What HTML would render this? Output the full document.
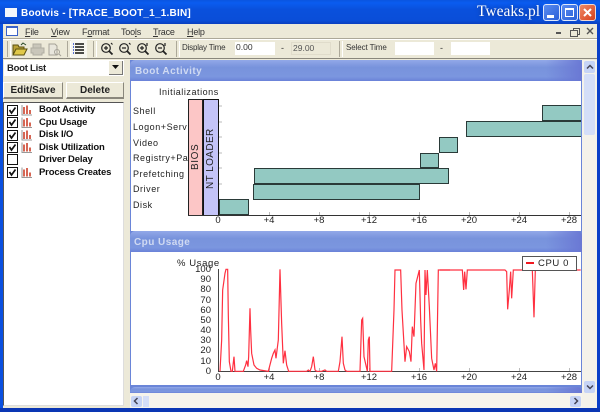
<!DOCTYPE html>
<html>
<head>
<meta charset="utf-8">
<style>
html,body{margin:0;padding:0;background:#0a3fc8;}
#w{position:relative;width:600px;height:412px;overflow:hidden;background:#ece9d8;font-family:"Liberation Sans",sans-serif;color:#000;filter:blur(.3px);}
#w div,#w span.a{position:absolute;}
.t{white-space:nowrap;line-height:12px;}
u{text-decoration:underline;}
.btn{background:#ece9d8;border-top:1px solid #fff;border-left:1px solid #fff;border-right:1px solid #8a877c;border-bottom:2px solid #8a877c;font-weight:bold;font-size:10px;text-align:center;line-height:15px;box-sizing:border-box;color:#222;}
.inp{background:#fff;box-sizing:border-box;font-size:8px;line-height:14px;padding-left:1px;}
.hd{background:linear-gradient(90deg,transparent 92%,#6a78d4 100%),linear-gradient(#92a8e8,#7893dc 35%,#7b96df 80%,#6a82d8);border-radius:5px 5px 0 0;}
.ht{color:#d0daf2;font-size:10px;font-weight:bold;letter-spacing:.45px;white-space:nowrap;line-height:12px;}
.cb{width:11px;height:11px;border:1px solid #111;background:#fff;box-sizing:border-box;}
.li{font-size:9.5px;font-weight:bold;white-space:nowrap;line-height:12px;letter-spacing:-.15px;color:#111;}
.m{font-size:9px;letter-spacing:-.2px;color:#333;top:26px;}
.lb{font-size:9px;letter-spacing:.55px;white-space:nowrap;line-height:11px;color:#222;}
.ax{font-size:9.5px;white-space:nowrap;line-height:11px;color:#222;text-align:center;width:30px;}
.yl{font-size:9.5px;white-space:nowrap;line-height:11px;color:#222;text-align:right;width:24px;left:187px;}
.bar{background:#93c9c2;border:1px solid #2a3a38;box-sizing:border-box;}
.sep{width:2px;border-left:1px solid #aca899;border-right:1px solid #fff;top:41px;height:16px;}
</style>
</head>
<body>
<div id="w">
<!-- frame -->
<div style="left:0;top:0;width:600px;height:24px;background:linear-gradient(#0a55e0,#0a5cf0 12%,#0a50dc 40%,#0a4ed8 85%,#0a3fc0);"></div>
<div style="left:0;top:24px;width:3px;height:388px;background:#0a50e0;"></div>
<div style="left:597px;top:24px;width:3px;height:388px;background:#0a3fc8;"></div>
<div style="left:0;top:408px;width:600px;height:4px;background:#0a36b4;"></div>

<!-- title -->
<div style="left:5px;top:8px;width:12px;height:9px;background:#f4f6fb;"></div>
<div class="t" style="left:21px;top:8px;color:#fff;font-size:10px;font-weight:bold;letter-spacing:.22px;">Bootvis - [TRACE_BOOT_1_1.BIN]</div>
<div class="t" style="left:477px;top:2px;color:#fff;font-family:'Liberation Serif',serif;font-size:15.5px;line-height:20px;text-shadow:0 0 4px #123a90;">Tweaks.pl</div>
<div style="left:543px;top:4px;width:17px;height:17px;border:1px solid #dfe8fb;border-radius:3px;background:linear-gradient(135deg,#5a8cf0,#2a5fd8);box-sizing:border-box;"><div style="left:3px;top:10px;width:7px;height:3px;background:#fff;"></div></div>
<div style="left:561px;top:4px;width:17px;height:17px;border:1px solid #dfe8fb;border-radius:3px;background:linear-gradient(135deg,#5a8cf0,#2a5fd8);box-sizing:border-box;"><div style="left:3px;top:3px;width:9px;height:9px;border:1px solid #fff;border-top-width:2px;box-sizing:border-box;"></div></div>
<div style="left:579px;top:4px;width:17px;height:17px;border:1px solid #f2d8d0;border-radius:3px;background:linear-gradient(135deg,#ee8a66,#d8401c);box-sizing:border-box;">
<svg style="position:absolute;left:2px;top:2px" width="11" height="11"><path d="M2 2L9 9M9 2L2 9" stroke="#fff" stroke-width="2"/></svg></div>

<!-- menu -->
<div style="left:6px;top:26px;width:12px;height:10px;background:#fff;border:1px solid #3a62c8;border-top-width:2px;box-sizing:border-box;"></div>
<div class="t m" style="left:25px;"><u>F</u>ile</div>
<div class="t m" style="left:51px;"><u>V</u>iew</div>
<div class="t m" style="left:82px;">F<u>o</u>rmat</div>
<div class="t m" style="left:121px;">Too<u>l</u>s</div>
<div class="t m" style="left:153px;"><u>T</u>race</div>
<div class="t m" style="left:187px;"><u>H</u>elp</div>
<div style="left:556px;top:32px;width:5px;height:2px;background:#555;"></div>
<div style="left:573px;top:28px;width:5px;height:5px;border:1px solid #555;"></div>
<div style="left:570px;top:30px;width:6px;height:5px;border:1px solid #555;background:#ece9d8;"></div>
<svg style="position:absolute;left:586px;top:27px" width="9" height="9"><path d="M1 1L7 7M7 1L1 7" stroke="#555" stroke-width="1.4"/></svg>
<div style="left:3px;top:38px;width:594px;height:1px;background:#aca899;"></div>
<div style="left:3px;top:39px;width:594px;height:1px;background:#fff;"></div>

<!-- toolbar -->
<div class="sep" style="left:7px;"></div>
<svg style="position:absolute;left:12px;top:42px" width="16" height="14"><path d="M1 3h5l1 2h5v2H5L1 12z" fill="#b8a038" stroke="#5a5010"/><path d="M4 7h11l-3 6H1z" fill="#e0c848" stroke="#5a5010"/><path d="M9 3l2-2 3 2" fill="none" stroke="#2a4a2a"/></svg>
<svg style="position:absolute;left:30px;top:42px" width="15" height="14"><path d="M3 6V2h8v4M1 6h13v5h-2v2H3v-2H1z" fill="#c9c6ba" stroke="#b0ada2"/></svg>
<svg style="position:absolute;left:48px;top:43px" width="14" height="14"><path d="M1 1h6l2 2v9H1z" fill="#e8e6dc" stroke="#a6a398"/><circle cx="9" cy="9" r="2.5" fill="none" stroke="#a6a398"/><path d="M11 11l2 2" stroke="#a6a398"/></svg>
<div class="sep" style="left:67px;"></div>
<div style="left:71px;top:40px;width:16px;height:18px;background:#f7f6f0;"></div>
<svg style="position:absolute;left:72px;top:42px" width="14" height="14"><path d="M3 2h9M3 5h9M3 8h9M3 11h9" stroke="#111" stroke-width="1.6"/><path d="M1 2h1M1 5h1M1 8h1M1 11h1" stroke="#2244cc" stroke-width="1.6"/></svg>
<div class="sep" style="left:93px;"></div>
<svg style="position:absolute;left:100px;top:41px" width="70" height="16" fill="none" stroke="#222" stroke-width="1.2">
<g><circle cx="6" cy="7" r="4.300"/><path d="M9 10l3.500 3.500" stroke-width="1.8"/><path d="M4 7h4M6 5v4M11 2l1.500 1.500"/></g>
<g transform="translate(18 0)"><circle cx="6" cy="7" r="4.300"/><path d="M9 10l3.500 3.500" stroke-width="1.8"/><path d="M4 7h4M11 2l1.500 1.500"/></g>
<g transform="translate(36 0)"><circle cx="6" cy="7" r="4.300"/><path d="M9 10l3.500 3.500" stroke-width="1.8"/><path d="M4 7h4M6 5v4M11 2v3"/></g>
<g transform="translate(54 0)"><circle cx="6" cy="7" r="4.300"/><path d="M9 10l3.500 3.500" stroke-width="1.8"/><path d="M4 7h4M11 2v3"/></g>
</svg>
<div class="sep" style="left:176px;"></div>
<div class="t" style="left:182px;top:42px;font-size:8px;letter-spacing:-.2px;color:#333;">Display Time</div>
<div class="inp" style="left:235px;top:42px;width:40px;height:13px;line-height:10px;font-size:8.5px;color:#333;">0.00</div>
<div class="t" style="left:281px;top:42px;font-size:9px;color:#333;">-</div>
<div class="inp" style="left:291px;top:42px;width:40px;height:13px;line-height:10px;font-size:8.5px;color:#555;background:#ece9d8;border:1px solid #e0dccb;">29.00</div>
<div class="sep" style="left:339px;"></div>
<div class="t" style="left:346px;top:42px;font-size:8px;letter-spacing:-.1px;color:#333;">Select Time</div>
<div class="inp" style="left:395px;top:42px;width:39px;height:13px;"></div>
<div class="t" style="left:440px;top:42px;font-size:9px;color:#333;">-</div>
<div class="inp" style="left:451px;top:42px;width:39px;height:13px;"></div>
<div style="left:3px;top:58px;width:594px;height:1px;background:#8a877c;"></div>

<!-- left pane -->
<div style="left:4px;top:60px;width:120px;height:16px;background:#fff;"></div>
<div class="t" style="left:7px;top:63px;font-size:9.5px;letter-spacing:-.25px;font-weight:bold;color:#222;">Boot List</div>
<div style="left:109px;top:61px;width:14px;height:14px;background:#ece9d8;border-right:1px solid #777;border-bottom:1px solid #777;box-sizing:border-box;"></div>
<svg style="position:absolute;left:112px;top:65px" width="8" height="5"><path d="M0 0h7L3.500 4z" fill="#111"/></svg>
<div class="btn" style="left:3px;top:82px;width:60px;height:17px;">Edit/Save</div>
<div class="btn" style="left:66px;top:82px;width:58px;height:17px;">Delete</div>
<div style="left:3px;top:102px;width:121px;height:304px;background:#fff;border:1px solid #555;border-right-color:#ddd;border-bottom-color:#ddd;box-sizing:border-box;"></div>

<div class="cb" style="left:7px;top:105px;"></div><svg style="position:absolute;left:8px;top:106px" width="9" height="9"><path d="M1.500 4L3.500 7L7.500 1.500" fill="none" stroke="#111" stroke-width="1.700"/></svg>
<div class="cb" style="left:7px;top:117px;"></div><svg style="position:absolute;left:8px;top:118px" width="9" height="9"><path d="M1.500 4L3.500 7L7.500 1.500" fill="none" stroke="#111" stroke-width="1.700"/></svg>
<div class="cb" style="left:7px;top:130px;"></div><svg style="position:absolute;left:8px;top:131px" width="9" height="9"><path d="M1.500 4L3.500 7L7.500 1.500" fill="none" stroke="#111" stroke-width="1.700"/></svg>
<div class="cb" style="left:7px;top:142px;"></div><svg style="position:absolute;left:8px;top:143px" width="9" height="9"><path d="M1.500 4L3.500 7L7.500 1.500" fill="none" stroke="#111" stroke-width="1.700"/></svg>
<div class="cb" style="left:7px;top:154px;"></div>
<div class="cb" style="left:7px;top:167px;"></div><svg style="position:absolute;left:8px;top:168px" width="9" height="9"><path d="M1.500 4L3.500 7L7.500 1.500" fill="none" stroke="#111" stroke-width="1.700"/></svg>

<svg style="position:absolute;left:21px;top:104px" width="12" height="75">
<g><path d="M1 1v10h10" fill="none" stroke="#999"/><path d="M3 3v7M6 1.500v8.500M9 6v4" stroke="#c8341c" stroke-width="1.500"/></g>
<g transform="translate(0 12.500)"><path d="M1 1v10h10" fill="none" stroke="#999"/><path d="M3 3v7M6 1.500v8.500M9 6v4" stroke="#c8341c" stroke-width="1.500"/></g>
<g transform="translate(0 25)"><path d="M1 1v10h10" fill="none" stroke="#999"/><path d="M3 3v7M6 1.500v8.500M9 6v4" stroke="#c8341c" stroke-width="1.500"/></g>
<g transform="translate(0 37.500)"><path d="M1 1v10h10" fill="none" stroke="#999"/><path d="M3 3v7M6 1.500v8.500M9 6v4" stroke="#c8341c" stroke-width="1.500"/></g>
<g transform="translate(0 62.500)"><path d="M1 1v10h10" fill="none" stroke="#999"/><path d="M3 3v7M6 1.500v8.500M9 6v4" stroke="#c8341c" stroke-width="1.500"/></g>
</svg>
<div class="li" style="left:39px;top:104px;">Boot Activity</div>
<div class="li" style="left:39px;top:117px;">Cpu Usage</div>
<div class="li" style="left:39px;top:129px;">Disk I/O</div>
<div class="li" style="left:39px;top:142px;">Disk Utilization</div>
<div class="li" style="left:39px;top:154px;">Driver Delay</div>
<div class="li" style="left:39px;top:167px;">Process Creates</div>

<!-- right pane -->
<div style="left:130px;top:60px;width:452px;height:333px;background:#6a85d8;"></div>
<div class="hd" style="left:130px;top:60px;width:452px;height:21px;"></div>
<div class="ht" style="left:135px;top:66px;">Boot Activity</div>
<div style="left:131px;top:81px;width:450px;height:150px;background:#fff;"></div>
<div class="hd" style="left:130px;top:231px;width:452px;height:21px;"></div>
<div class="ht" style="left:134px;top:237px;">Cpu Usage</div>
<div style="left:131px;top:252px;width:450px;height:133px;background:#fff;"></div>
<div class="hd" style="left:130px;top:387px;width:452px;height:6px;"></div>

<!-- boot activity chart -->
<div class="lb" style="left:159px;top:87px;color:#222;">Initializations</div>
<div class="lb" style="left:133px;top:106px;">Shell</div>
<div class="lb" style="left:133px;top:122px;width:54px;overflow:hidden;">Logon+Services</div>
<div class="lb" style="left:133px;top:138px;">Video</div>
<div class="lb" style="left:133px;top:153px;width:55px;overflow:hidden;">Registry+Pagefile</div>
<div class="lb" style="left:133px;top:169px;">Prefetching</div>
<div class="lb" style="left:133px;top:184px;">Driver</div>
<div class="lb" style="left:133px;top:200px;">Disk</div>
<div style="left:188px;top:99px;width:15px;height:117px;background:#fcc6c6;border:1px solid #222;border-bottom:0;box-sizing:border-box;"></div>
<div style="left:203px;top:99px;width:16px;height:117px;background:#c4c4f8;border:1px solid #111;border-bottom:0;box-sizing:border-box;"></div>
<div class="t" style="left:195px;top:170px;width:0;height:0;"><span class="a" style="transform:rotate(-90deg);transform-origin:0 0;left:-5px;top:0;font-size:10px;letter-spacing:.6px;white-space:nowrap;color:#222;">BIOS</span></div>
<div class="t" style="left:211px;top:189px;width:0;height:0;"><span class="a" style="transform:rotate(-90deg);transform-origin:0 0;left:-6px;top:0;font-size:10px;letter-spacing:.4px;white-space:nowrap;color:#222;">NT LOADER</span></div>
<div style="left:188px;top:215px;width:393px;height:1px;background:#333;"></div>
<div class="bar" style="left:219px;top:199px;width:30px;height:16px;"></div>
<div class="bar" style="left:253px;top:184px;width:167px;height:16px;"></div>
<div class="bar" style="left:254px;top:168px;width:195px;height:16px;"></div>
<div class="bar" style="left:420px;top:153px;width:19px;height:15px;"></div>
<div class="bar" style="left:439px;top:137px;width:19px;height:16px;"></div>
<div class="bar" style="left:466px;top:121px;width:115px;height:16px;border-right:0;"></div>
<div class="bar" style="left:542px;top:105px;width:39px;height:16px;border-right:0;"></div>
<svg style="position:absolute;left:219px;top:100px" width="4" height="115"><path d="M0 6h3M0 22h3M0 37h3M0 53h3M0 68h3M0 84h3" stroke="#bbb"/></svg>
<svg style="position:absolute;left:0;top:0" width="600" height="412"><path d="M269.500 212v3M319.500 212v3M369.500 212v3M419.500 212v3M469.500 212v3M519.500 212v3M569.500 212v3M269.500 368v3M319.500 368v3M369.500 368v3M419.500 368v3M469.500 368v3M519.500 368v3M569.500 368v3" stroke="#bbb"/></svg>
<div class="ax" style="left:203px;top:215px;">0</div>
<div class="ax" style="left:254px;top:215px;">+4</div>
<div class="ax" style="left:304px;top:215px;">+8</div>
<div class="ax" style="left:354px;top:215px;">+12</div>
<div class="ax" style="left:404px;top:215px;">+16</div>
<div class="ax" style="left:454px;top:215px;">+20</div>
<div class="ax" style="left:504px;top:215px;">+24</div>
<div class="ax" style="left:554px;top:215px;">+28</div>

<!-- cpu chart -->
<div class="t" style="left:177px;top:258px;font-size:9.5px;letter-spacing:.6px;color:#222;line-height:11px;">% Usage</div>
<div class="yl t" style="top:264px;">100</div>
<div class="yl t" style="top:274px;">90</div>
<div class="yl t" style="top:284px;">80</div>
<div class="yl t" style="top:295px;">70</div>
<div class="yl t" style="top:305px;">60</div>
<div class="yl t" style="top:315px;">50</div>
<div class="yl t" style="top:325px;">40</div>
<div class="yl t" style="top:335px;">30</div>
<div class="yl t" style="top:345px;">20</div>
<div class="yl t" style="top:356px;">10</div>
<div class="yl t" style="top:366px;">0</div>
<div style="left:218px;top:269px;width:1px;height:102px;background:#444;"></div>
<div style="left:218px;top:371px;width:363px;height:1px;background:#444;"></div>
<svg style="position:absolute;left:0;top:0" width="600" height="412" fill="none" stroke="#ff3040" stroke-width="1.2">
<polyline transform="translate(130 230) scale(.3333)" style="vector-effect:non-scaling-stroke" points="270,424 275,330 278,180 285,130 288,118 293,118 295,255 298,395 303,424 307,424 312,380 315,424 340,424 347,405 350,392 354,410 356,380 360,235 362,300 365,370 372,405 380,415 390,420 415,424 425,385 430,370 435,360 438,385 445,330 450,118 455,280 460,400 465,362 470,405 476,424 480,424"/>
<polyline transform="translate(290 230) scale(.3333)" style="vector-effect:non-scaling-stroke" points="0,424 50,424 55,420 60,424 65,410 70,380 75,420 80,424 90,424 95,424 105,420 110,424 145,424 150,395 156,320 160,400 165,420 170,424 210,424 215,270 218,265 222,380 230,415 232,424 235,330 238,320 240,424 305,424 312,240 315,120 332,120 336,240 345,395 350,350 358,365 363,395 367,290 372,320 378,160 388,120 392,270 395,340 402,420 405,120 408,195 412,120 418,230 425,385 432,420 436,400 440,424 445,120 480,120"/>
<polyline transform="translate(440 230) scale(.3333)" style="vector-effect:non-scaling-stroke" points="0,120 67,120 71,180 74,125 78,178 82,120 195,120 200,125 203,238 208,180 212,125 215,205 220,120 277,120 282,262 286,120 422,120"/>
</svg>
<div class="ax" style="left:203px;top:372px;">0</div>
<div class="ax" style="left:254px;top:372px;">+4</div>
<div class="ax" style="left:304px;top:372px;">+8</div>
<div class="ax" style="left:354px;top:372px;">+12</div>
<div class="ax" style="left:404px;top:372px;">+16</div>
<div class="ax" style="left:454px;top:372px;">+20</div>
<div class="ax" style="left:504px;top:372px;">+24</div>
<div class="ax" style="left:554px;top:372px;">+28</div>
<div style="left:522px;top:256px;width:55px;height:15px;background:#fff;border:1px solid #555;box-sizing:border-box;"></div>
<div style="left:526px;top:262px;width:8px;height:2px;background:#f01820;"></div>
<div class="t" style="left:538px;top:258px;font-size:9.5px;letter-spacing:.6px;color:#222;line-height:11px;">CPU 0</div>

<!-- scrollbars -->
<div style="left:582px;top:60px;width:15px;height:348px;background:#f4f2ea;"></div>
<div style="left:584px;top:61px;width:11px;height:12px;background:#c6d4f6;border-radius:2px;"></div>
<svg style="position:absolute;left:586px;top:64px" width="8" height="6"><path d="M1 4.500L4 1.500L7 4.500" fill="none" stroke="#445" stroke-width="1.500"/></svg>
<div style="left:584px;top:74px;width:11px;height:61px;background:#d4def8;border-radius:2px;"></div>
<div style="left:584px;top:381px;width:11px;height:12px;background:#c6d4f6;border-radius:2px;"></div>
<svg style="position:absolute;left:586px;top:384px" width="8" height="6"><path d="M1 1.500L4 4.500L7 1.500" fill="none" stroke="#445" stroke-width="1.500"/></svg>
<div style="left:130px;top:393px;width:452px;height:15px;background:#f6f4ec;"></div>
<div style="left:131px;top:396px;width:11px;height:11px;background:#c6d4f6;border-radius:2px;"></div>
<svg style="position:absolute;left:133px;top:397px" width="6" height="8"><path d="M4.500 1L1.500 4L4.500 7" fill="none" stroke="#445" stroke-width="1.500"/></svg>
<div style="left:143px;top:396px;width:6px;height:11px;background:#d4def8;"></div>
<div style="left:570px;top:396px;width:11px;height:11px;background:#c6d4f6;border-radius:2px;"></div>
<svg style="position:absolute;left:573px;top:397px" width="6" height="8"><path d="M1.500 1L4.500 4L1.500 7" fill="none" stroke="#445" stroke-width="1.500"/></svg>
</div>
</body>
</html>
